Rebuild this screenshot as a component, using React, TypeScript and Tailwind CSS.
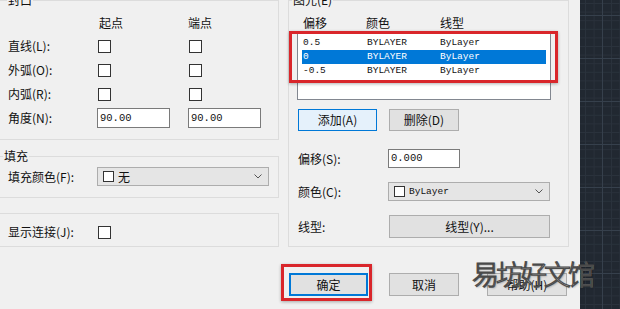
import React from "react";

function Check() {
  return <span className="block w-[13px] h-[13px] border border-[#333333] bg-white" />;
}

function Chevron() {
  return (
    <svg width="8" height="5" viewBox="0 0 8 5" className="shrink-0">
      <polyline points="0.5,0.5 4,4 7.5,0.5" fill="none" stroke="#555" strokeWidth="1" />
    </svg>
  );
}

function Btn({ children, className }: { children: React.ReactNode; className: string }) {
  return <div className={"flex items-center justify-center " + className}>{children}</div>;
}

function Grid() {
  const minor: number[] = [];
  for (let i = -40; i < 320; i += 8.6) minor.push(i);
  const majorY = [15, 58, 101, 144, 187, 230, 273];
  return (
    <svg width="40" height="309" viewBox="0 0 40 309" className="block">
      <rect width="40" height="309" fill="#212831" />
      {minor.map((v, i) => (
        <line key={"h" + i} x1="0" x2="40" y1={v + 0.5} y2={v + 0.5} stroke="#2a323c" strokeWidth="1" />
      ))}
      {[5, 13.6, 31, 39.4].map((v, i) => (
        <line key={"v" + i} y1="0" y2="309" x1={v + 0.5} x2={v + 0.5} stroke="#2a323c" strokeWidth="1" />
      ))}
      {majorY.map((v, i) => (
        <line key={"m" + i} x1="0" x2="40" y1={v + 0.5} y2={v + 0.5} stroke="#36404c" strokeWidth="1" />
      ))}
      <line y1="0" y2="309" x1="22.5" x2="22.5" stroke="#36404c" strokeWidth="1" />
    </svg>
  );
}

export default function App() {
  return (
    <div className="relative w-[620px] h-[309px] overflow-hidden flex bg-[#f0f0f0] text-[12px] text-[#111111] font-['Noto_Sans_CJK_SC',sans-serif] leading-none">
      <div className="w-[580px] shrink-0 flex flex-col">
        <div className="flex -mt-[7px]">
          {/* left column */}
          <div className="-ml-[6px] w-[285px] shrink-0 flex flex-col">
            <fieldset className="h-[147px] border border-[#dcdcdc] m-0 p-0 min-w-0">
              <legend className="ml-[12px] px-[1px] h-[14px] leading-[14px]">封口</legend>
              <div className="grid grid-cols-[102px_91px_1fr] mt-[8px] h-[16px] items-center">
                <span />
                <span className="pl-[2px]">起点</span>
                <span>端点</span>
              </div>
              <div className="mt-[3px] grid grid-cols-[102px_91px_1fr] auto-rows-[24px] items-center">
                <span className="pl-[13px]">直线(L):</span>
                <span className="ml-[1px]"><Check /></span>
                <span className="ml-[1px]"><Check /></span>
                <span className="pl-[13px]">外弧(O):</span>
                <span className="ml-[1px]"><Check /></span>
                <span className="ml-[1px]"><Check /></span>
                <span className="pl-[13px]">内弧(R):</span>
                <span className="ml-[1px]"><Check /></span>
                <span className="ml-[1px]"><Check /></span>
                <span className="pl-[13px]">角度(N):</span>
                <span className="w-[73px] h-[20px] border border-[#7a7a7a] bg-white flex items-center pl-[2px] font-['Liberation_Mono',monospace] text-[10.5px]">90.00</span>
                <span className="w-[73px] h-[20px] border border-[#7a7a7a] bg-white flex items-center pl-[2px] font-['Liberation_Mono',monospace] text-[10.5px]">90.00</span>
              </div>
            </fieldset>
            <fieldset className="mt-[9px] h-[49px] border border-[#dcdcdc] m-0 p-0 min-w-0">
              <legend className="ml-[8px] px-[1px] h-[14px] leading-[14px]">填充</legend>
              <div className="mt-[4px] h-[19px] flex items-center">
                <span className="w-[102px] pl-[13px]">填充颜色(F):</span>
                <div className="w-[172px] h-[19px] border border-[#adadad] bg-[#e5e5e5] flex items-center pl-[5px] pr-[6px]">
                  <span className="block w-[11px] h-[11px] border border-[#333333] bg-white" />
                  <span className="ml-[4px] flex-1">无</span>
                  <Chevron />
                </div>
              </div>
            </fieldset>
            <div className="mt-[15px] h-[34px] border border-[#dcdcdc]">
              <div className="mt-[6px] h-[24px] flex items-center">
                <span className="w-[102px] pl-[13px]">显示连接(J):</span>
                <span className="ml-[1px]"><Check /></span>
              </div>
            </div>
          </div>

          {/* right group */}
          <fieldset className="ml-[9px] w-[281px] h-[254px] shrink-0 border border-[#dcdcdc] m-0 p-0 min-w-0">
            <legend className="ml-[3px] px-[1px] h-[14px] leading-[14px]">图元(E)</legend>
            <div className="mt-[8px] h-[16px] flex items-center">
              <span className="ml-[14px] w-[63px]">偏移</span>
              <span className="w-[74px]">颜色</span>
              <span>线型</span>
            </div>
            <div className="mt-[2px] ml-[8px] w-[254px] h-[67px] border border-[#828790] bg-white pt-[2px] px-[4px] font-['Liberation_Mono',monospace] text-[9.5px]">
              <div className="h-[14px] flex items-center">
                <span className="w-[65px] pl-[1px]">0.5</span>
                <span className="w-[73px]">BYLAYER</span>
                <span>ByLayer</span>
              </div>
              <div className="h-[14px] flex items-center bg-[#0078d7] text-white">
                <span className="w-[65px] pl-[1px]">0</span>
                <span className="w-[73px]">BYLAYER</span>
                <span>ByLayer</span>
              </div>
              <div className="h-[14px] flex items-center">
                <span className="w-[65px] pl-[1px]">-0.5</span>
                <span className="w-[73px]">BYLAYER</span>
                <span>ByLayer</span>
              </div>
            </div>
            <div className="mt-[9px] ml-[9px] h-[22px] flex gap-[12px]">
              <Btn className="w-[79px] h-[22px] border border-[#0078d7] bg-[#e5f1fb]">添加(A)</Btn>
              <Btn className="w-[70px] h-[22px] border border-[#adadad] bg-[#e1e1e1]">删除(D)</Btn>
            </div>
            <div className="mt-[18px] h-[19px] flex items-center">
              <span className="w-[99px] pl-[9px]">偏移(S):</span>
              <span className="w-[72px] h-[19px] border border-[#7a7a7a] bg-white flex items-center pl-[2px] font-['Liberation_Mono',monospace] text-[10.5px]">0.000</span>
            </div>
            <div className="mt-[14px] h-[19px] flex items-center">
              <span className="w-[99px] pl-[9px]">颜色(C):</span>
              <div className="w-[162px] h-[19px] border border-[#adadad] bg-[#e5e5e5] flex items-center pl-[5px] pr-[6px]">
                <span className="block w-[11px] h-[11px] border border-[#333333] bg-white" />
                <span className="ml-[4px] flex-1 font-['Liberation_Mono',monospace] text-[9.5px]">ByLayer</span>
                <Chevron />
              </div>
            </div>
            <div className="mt-[14px] h-[23px] flex items-center">
              <span className="w-[100px] pl-[9px]">线型:</span>
              <Btn className="w-[161px] h-[23px] border border-[#adadad] bg-[#e1e1e1]">线型(Y)...</Btn>
            </div>
          </fieldset>
        </div>

        {/* bottom buttons */}
        <div className="mt-[26px] pl-[289px] h-[23px] flex">
          <Btn className="w-[79px] h-[23px] border-2 border-[#0078d7] bg-[#e1e1e1]">确定</Btn>
          <Btn className="ml-[21px] w-[70px] h-[23px] border border-[#adadad] bg-[#e1e1e1]">取消</Btn>
          <Btn className="ml-[28px] w-[80px] h-[23px] border border-[#adadad] bg-[#e1e1e1]">帮助(H)</Btn>
        </div>
      </div>

      <div className="w-[40px] shrink-0">
        <Grid />
      </div>

      {/* annotations */}
      <div className="absolute left-[289px] top-[31px] w-[269px] h-[52px] border-[3px] border-[#d9262b] shadow-[0_1px_3px_rgba(0,0,0,0.3)]" />
      <div className="absolute left-[281px] top-[264px] w-[91px] h-[37px] border-[3px] border-[#d9262b] shadow-[0_1px_3px_rgba(0,0,0,0.3)]" />
      <div className="absolute left-[472px] top-[255px] text-[27px] leading-[38px] tracking-[-3px] font-light text-white [-webkit-text-stroke:1.2px_#4a4a4a] [text-shadow:1px_1px_2px_rgba(0,0,0,0.35)]">
        易坊好文馆
      </div>
    </div>
  );
}
